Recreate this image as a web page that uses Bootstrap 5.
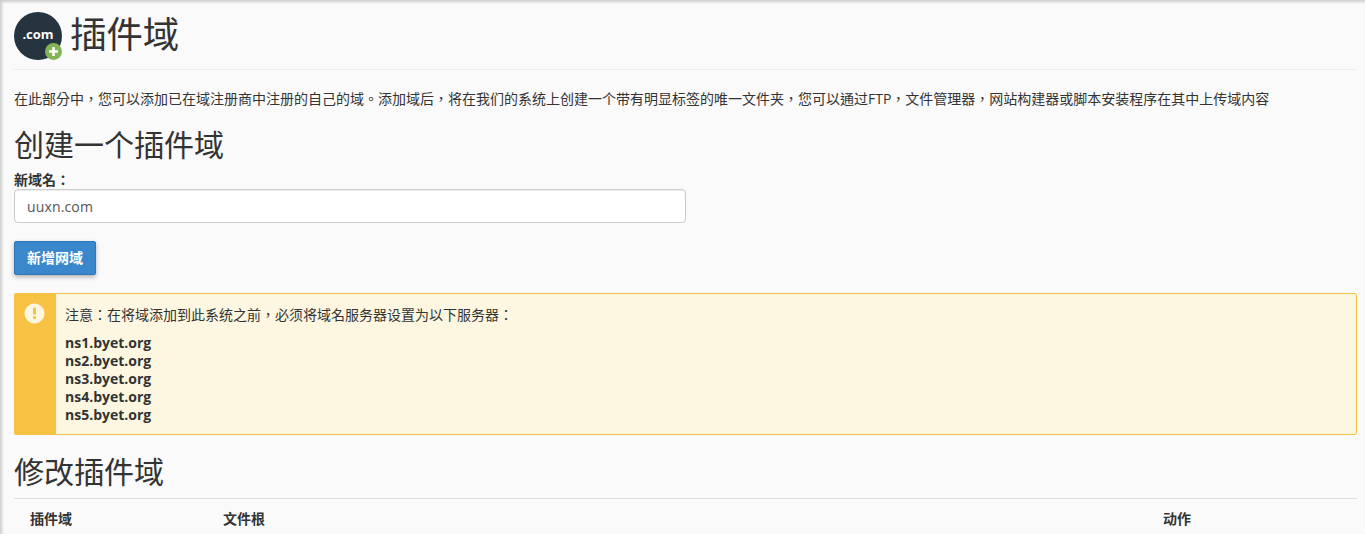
<!DOCTYPE html>
<html lang="zh-TW">
<head>
<meta charset="utf-8">
<link href="https://cdn.jsdelivr.net/npm/bootstrap@5.3.0/dist/css/bootstrap.min.css" rel="stylesheet">
<style>
html,body{height:534px;overflow:hidden}
body{background:#fafafa;color:#333;font-family:"Open Sans","Noto Sans CJK TC",sans-serif;font-size:14px;line-height:18px;box-shadow:inset 2px 2px 3px rgba(0,0,0,.18)}
.pg{padding:2px 8px 0 14px}
.pghead{height:68px;border-bottom:1px solid #eee;padding-top:10px;gap:8px}
.pghead h1{font-size:36.400px;line-height:44px;margin:0;font-weight:400;color:#333}
.intro{margin:20px 0 0;height:18px}
.sect{font-size:30px;line-height:36px;font-weight:400;margin:0;color:#333}
.s1{margin-top:19px}
.lbl{font-weight:700;margin:8px 0 0;display:block;line-height:18px;height:18px}
.fc{width:672px;height:34px;border:1px solid #ccc;border-radius:4px;background:#fff;font-size:14px;letter-spacing:.15px;padding:7px 12px 5px;color:#555;box-shadow:inset 0 1px 1px rgba(0,0,0,.075);line-height:20px}
.bt{margin-top:18px;background:#3a87cb;border:1px solid #2f78b8;color:#fff;font-weight:700;font-size:14px;height:34px;width:82px;padding:0;border-radius:2px;box-shadow:0 2px 4px rgba(0,0,0,.3);line-height:32px}
.bt:hover{background:#3a87cb;color:#fff;border-color:#2f78b8}
.note{margin-top:18px;height:142px;border:1px solid #f6c244;border-radius:2px;background:#fdf7e1}
.noteic{width:41px;background:#f7c244;flex:none;padding:9px 0 0 9px}
.notebody{padding:12px 9px}
.notebody p{margin:0 0 10px}
.notebody b{font-weight:700;font-size:14px;display:block}
.s2{margin-top:19px}
.tbl{margin-top:8px;border-top:1px solid #ddd;font-weight:700;padding:11px 0 0 16px}
.c1{width:193px}.c2{width:940px}
</style>
</head>
<body>
<div class="pg">
<div class="pghead d-flex align-items-start">
<svg width="48" height="50" viewBox="0 0 48 50"><circle cx="24" cy="24" r="24" fill="#26343f"/><circle cx="39.500" cy="39.500" r="8.500" fill="#84b356"/><path d="M39.500 35v9M35 39.500h9" stroke="#fff" stroke-width="2.500"/><text x="24" y="27" text-anchor="middle" fill="#fff" font-size="13" font-weight="700" font-family="Open Sans">.com</text></svg>
<h1>插件域</h1>
</div>
<p class="intro">在此部分中，您可以添加已在域注册商中注册的自己的域。添加域后，将在我们的系统上创建一个带有明显标签的唯一文件夹，您可以通过FTP，文件管理器，网站构建器或脚本安装程序在其中上传域内容</p>
<h2 class="sect s1">创建一个插件域</h2>
<label class="lbl">新域名：</label>
<div class="fc">uuxn.com</div>
<button class="btn bt d-block" type="button">新增网域</button>
<div class="note d-flex">
<div class="noteic"><svg width="21" height="21" viewBox="0 0 21 21"><circle cx="10.500" cy="10.500" r="10" fill="#fdf7e1"/><rect x="9" y="4.500" width="3" height="7" rx="1.200" fill="#f7c244"/><circle cx="10.500" cy="14.500" r="1.600" fill="#f7c244"/></svg></div>
<div class="notebody"><p>注意：在将域添加到此系统之前，必须将域名服务器设置为以下服务器：</p><b>ns1.byet.org</b><b>ns2.byet.org</b><b>ns3.byet.org</b><b>ns4.byet.org</b><b>ns5.byet.org</b></div>
</div>
<h2 class="sect s2">修改插件域</h2>
<div class="tbl d-flex"><div class="c1">插件域</div><div class="c2">文件根</div><div>动作</div></div>
</div>
</body>
</html>
